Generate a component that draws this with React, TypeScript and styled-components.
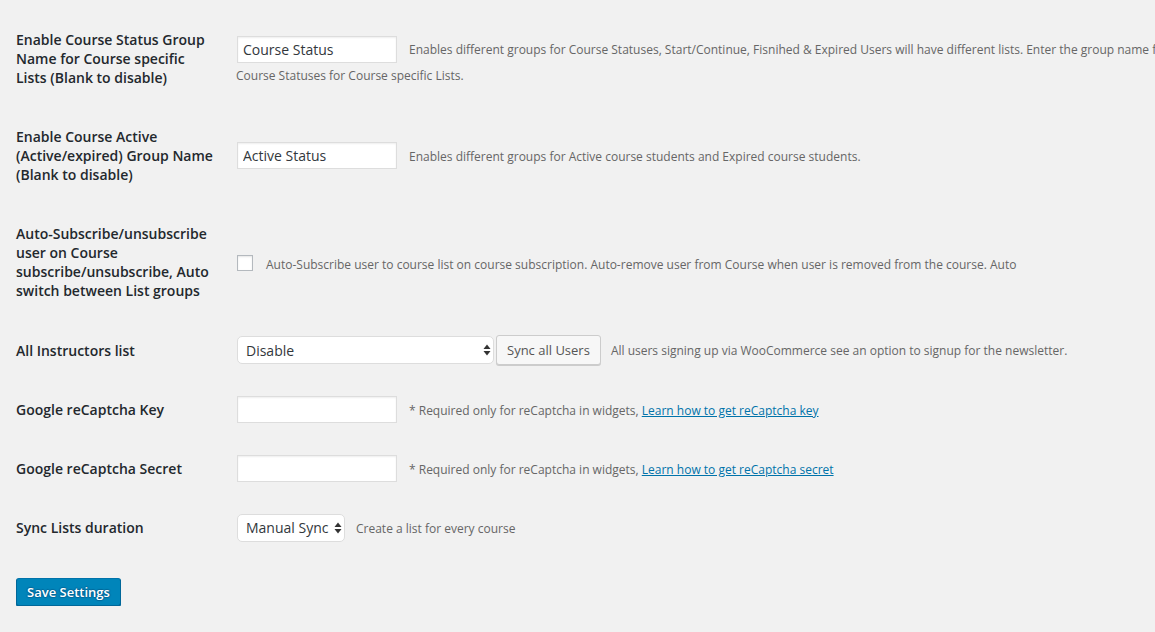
import React from "react";
import styled, { createGlobalStyle } from "styled-components";

const GlobalStyle = createGlobalStyle`
  html, body {
    margin: 0;
    padding: 0;
    background: #f1f1f1;
    overflow: hidden;
  }
  body {
    font-family: "Open Sans", "Liberation Sans", sans-serif;
    color: #23282d;
    font-size: 13px;
    line-height: 1.4em;
  }
`;

const Page = styled.div`
  width: 1184px;
  padding: 10px 0 0 16px;
`;

const FormTable = styled.div`
  display: flex;
  flex-direction: column;
`;

const Row = styled.div`
  display: grid;
  grid-template-columns: 210px 1fr;
  align-items: center;
`;

const Label = styled.div`
  width: 200px;
  padding: 20px 10px 20px 0;
  font-size: 14px;
  font-weight: 600;
  line-height: 19px;
  color: #23282d;
`;

const Field = styled.div`
  padding: 15px 10px;
  font-size: 13px;
  line-height: 18px;
`;

const TextInput = styled.input`
  box-sizing: border-box;
  width: 160px;
  height: 27px;
  margin: 1px;
  padding: 2px 5px;
  border: 1px solid #ddd;
  background: #fff;
  box-shadow: inset 0 1px 2px rgba(0, 0, 0, 0.07);
  font-family: "Open Sans", "Liberation Sans", sans-serif;
  font-size: 14px;
  color: #32373c;
  vertical-align: middle;
  outline: none;
`;

const Description = styled.span<{ $gap?: number }>`
  color: #666;
  font-size: 12px;
  margin-left: ${(p) => p.$gap ?? 11}px;
  position: relative;
  top: 2px;
`;

const Link = styled.a`
  color: #0073aa;
  text-decoration: underline;
`;

const Checkbox = styled.span`
  display: inline-block;
  box-sizing: border-box;
  width: 16px;
  height: 16px;
  margin: 0 0 0 1px;
  border: 1px solid #b4b9be;
  background: #fff;
  box-shadow: inset 0 1px 2px rgba(0, 0, 0, 0.1);
  vertical-align: middle;
`;

const SelectWrap = styled.span<{ $width: number }>`
  position: relative;
  display: inline-block;
  box-sizing: border-box;
  width: ${(p) => p.$width}px;
  height: 28px;
  margin-left: 1px;
  vertical-align: middle;
`;

const Select = styled.select`
  appearance: none;
  -webkit-appearance: none;
  box-sizing: border-box;
  width: 100%;
  height: 100%;
  padding: 0 12px 0 8px;
  border: 1px solid #ddd;
  border-radius: 5px;
  background: #fff;
  font-family: "Open Sans", "Liberation Sans", sans-serif;
  font-size: 14px;
  color: #32373c;
  outline: none;
`;

const Arrows = styled.svg`
  position: absolute;
  right: 3px;
  top: 8px;
  pointer-events: none;
`;

const Button = styled.button`
  box-sizing: border-box;
  height: 30px;
  margin-left: 2px;
  padding: 0 10px 1px;
  border: 1px solid #ccc;
  border-radius: 3px;
  background: #f7f7f7;
  box-shadow: 0 1px 0 #ccc;
  font-family: "Open Sans", "Liberation Sans", sans-serif;
  font-size: 13px;
  line-height: 26px;
  color: #555;
  vertical-align: middle;
`;

const Submit = styled.div`
  padding: 21px 0 0;
`;

const PrimaryButton = styled.button`
  box-sizing: border-box;
  height: 28px;
  padding: 0 10px 1px;
  border: 1px solid #0073aa;
  border-color: #0073aa #006799 #006799;
  border-radius: 3px;
  background: #0085ba;
  box-shadow: 0 1px 0 #006799;
  color: #fff;
  text-shadow: 0 -1px 1px #006799, 1px 0 1px #006799, 0 1px 1px #006799,
    -1px 0 1px #006799;
  font-family: "Open Sans", "Liberation Sans", sans-serif;
  font-size: 13px;
  font-weight: 600;
  line-height: 26px;
`;

const SelectArrows = () => (
  <Arrows width="8" height="12" viewBox="0 0 8 12">
    <path d="M4 0.5 L7.5 5 H0.5 Z" fill="#333" />
    <path d="M4 11.5 L7.5 7 H0.5 Z" fill="#333" />
  </Arrows>
);

export default function App() {
  return (
    <>
      <GlobalStyle />
      <Page>
        <FormTable>
          <Row>
            <Label>Enable Course Status Group Name for Course specific Lists (Blank to disable)</Label>
            <Field>
              <TextInput defaultValue="Course Status" />
              <Description>
                Enables different groups for Course Statuses, Start/Continue, Fisnihed &amp; Expired Users will have different lists. Enter the group name for Course Statuses for Course specific Lists.
              </Description>
            </Field>
          </Row>
          <Row>
            <Label>Enable Course Active (Active/expired) Group Name (Blank to disable)</Label>
            <Field>
              <TextInput defaultValue="Active Status" />
              <Description>
                Enables different groups for Active course students and Expired course students.
              </Description>
            </Field>
          </Row>
          <Row>
            <Label>Auto-Subscribe/unsubscribe user on Course subscribe/unsubscribe, Auto switch between List groups</Label>
            <Field>
              <Checkbox />
              <Description $gap={13}>
                Auto-Subscribe user to course list on course subscription. Auto-remove user from Course when user is removed from the course. Auto
              </Description>
            </Field>
          </Row>
          <Row>
            <Label>All Instructors list</Label>
            <Field>
              <SelectWrap $width={257}>
                <Select defaultValue="Disable">
                  <option>Disable</option>
                </Select>
                <SelectArrows />
              </SelectWrap>
              <Button>Sync all Users</Button>
              <Description $gap={10}>
                All users signing up via WooCommerce see an option to signup for the newsletter.
              </Description>
            </Field>
          </Row>
          <Row>
            <Label>Google reCaptcha Key</Label>
            <Field>
              <TextInput />
              <Description>
                * Required only for reCaptcha in widgets, <Link href="#">Learn how to get reCaptcha key</Link>
              </Description>
            </Field>
          </Row>
          <Row>
            <Label>Google reCaptcha Secret</Label>
            <Field>
              <TextInput />
              <Description>
                * Required only for reCaptcha in widgets, <Link href="#">Learn how to get reCaptcha secret</Link>
              </Description>
            </Field>
          </Row>
          <Row>
            <Label>Sync Lists duration</Label>
            <Field>
              <SelectWrap $width={108}>
                <Select defaultValue="Manual Sync">
                  <option>Manual Sync</option>
                </Select>
                <SelectArrows />
              </SelectWrap>
              <Description>Create a list for every course</Description>
            </Field>
          </Row>
        </FormTable>
        <Submit>
          <PrimaryButton>Save Settings</PrimaryButton>
        </Submit>
      </Page>
    </>
  );
}
